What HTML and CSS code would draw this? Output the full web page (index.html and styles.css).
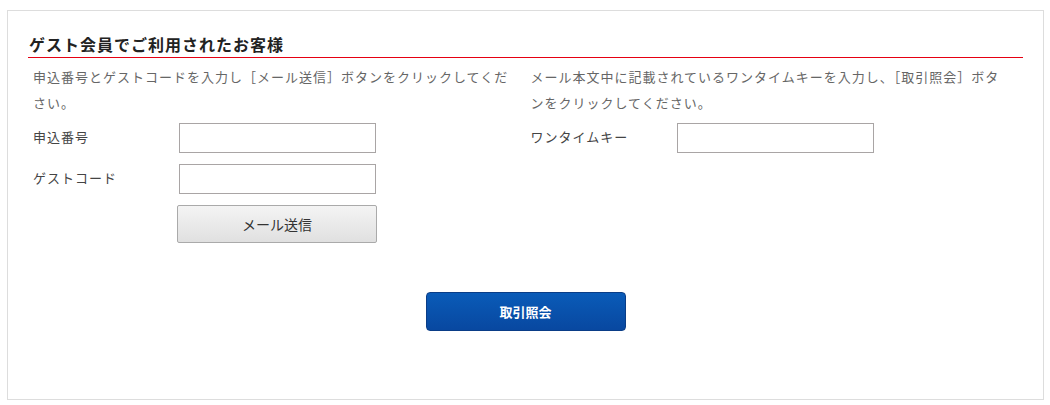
FILE: index.html
```html
<!DOCTYPE html>
<html lang="ja">
<head>
	<meta charset="UTF-8">
	<title>ゲスト会員でご利用されたお客様</title>
	<link rel="stylesheet" href="styles.css">
</head>
<body>
	<div class="guest">
		<h2 class="guest-title">ゲスト会員でご利用されたお客様</h2>
		<div class="cols">
			<div class="col">
				<p class="desc">申込番号とゲストコードを入力し［メール送信］ボタンをクリックしてください。</p>
				<div class="row">
					<label class="lbl">申込番号</label>
					<input type="text" class="txt">
				</div>
				<div class="row">
					<label class="lbl">ゲストコード</label>
					<input type="text" class="txt">
				</div>
				<div class="row">
					<span class="lbl"></span>
					<button class="btn-gray">メール送信</button>
				</div>
			</div>
			<div class="col">
				<p class="desc">メール本文中に記載されているワンタイムキーを入力し、［取引照会］ボタンをクリックしてください。</p>
				<div class="row">
					<label class="lbl">ワンタイムキー</label>
					<input type="text" class="txt">
				</div>
			</div>
		</div>
		<div class="submit">
			<button class="btn-blue">取引照会</button>
		</div>
	</div>
</body>
</html>
```

FILE: styles.css
```css
*{
	margin: 0;
	padding: 0;
	box-sizing: border-box;
}
body{
	font-family: "Noto Sans CJK JP", "Liberation Sans", sans-serif;
	font-size: 13px;
	letter-spacing: 1px;
	color: #333;
	background: #fff;
}
.guest{
	margin: 10px 6px 0 7px;
	height: 390px;
	padding: 22px 20px 0 20px;
	border: 1px solid #ddd;
}
.guest-title{
	font-size: 16px;
	font-weight: bold;
	color: #222;
	line-height: 22px;
	padding: 0 0 2px 1px;
	border-bottom: 1px solid #e60012;
}
.cols{
	display: flex;
}
.col{
	width: 50%;
	padding: 6px 12px 0 5px;
}
.desc{
	color: #666;
	line-height: 26px;
	margin-bottom: 7px;
}
.row{
	display: flex;
	align-items: center;
	margin-bottom: 11px;
}
.lbl{
	width: 146px;
	flex: none;
	padding-bottom: 3px;
	font-weight: normal;
	color: #444;
}
.txt{
	width: 197px;
	height: 30px;
	border: 1px solid #a9a5a5;
	background: #fff;
}
.btn-gray{
	margin-left: -2px;
	width: 200px;
	height: 38px;
	font-family: inherit;
	font-size: 14px;
	letter-spacing: 0;
	color: #333;
	border: 1px solid #aaa;
	border-radius: 2px;
	background: linear-gradient(#f4f4f4, #e0e0e0);
}
.submit{
	display: flex;
	justify-content: center;
	margin-top: 38px;
}
.btn-blue{
	width: 200px;
	height: 39px;
	font-family: inherit;
	font-size: 13px;
	font-weight: bold;
	letter-spacing: 0;
	color: #fff;
	border: 1px solid #0a3d87;
	border-radius: 4px;
	background: linear-gradient(#0a5bb8, #0848a0);
}
```
